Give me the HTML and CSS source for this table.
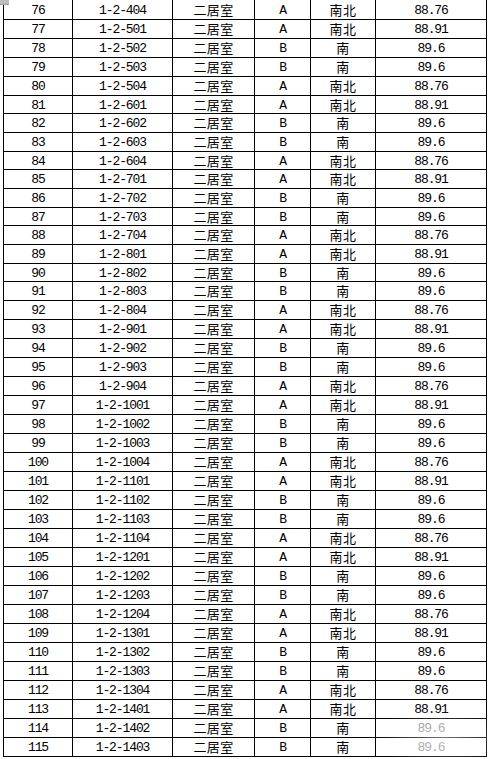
FILE: index.html
```html
<!DOCTYPE html>
<html lang="zh">
<head>
<meta charset="utf-8">
<title>房源列表</title>
<link rel="stylesheet" href="styles.css">
</head>
<body>
<div class="corner"></div>
<div class="sheet">
<div class="row first"><div class="c">76</div><div class="c">1-2-404</div><div class="c cjk">二居室</div><div class="c">A</div><div class="c cjk">南北</div><div class="c">88.76</div></div>
<div class="row"><div class="c">77</div><div class="c">1-2-501</div><div class="c cjk">二居室</div><div class="c">A</div><div class="c cjk">南北</div><div class="c">88.91</div></div>
<div class="row"><div class="c">78</div><div class="c">1-2-502</div><div class="c cjk">二居室</div><div class="c">B</div><div class="c cjk">南</div><div class="c">89.6</div></div>
<div class="row"><div class="c">79</div><div class="c">1-2-503</div><div class="c cjk">二居室</div><div class="c">B</div><div class="c cjk">南</div><div class="c">89.6</div></div>
<div class="row"><div class="c">80</div><div class="c">1-2-504</div><div class="c cjk">二居室</div><div class="c">A</div><div class="c cjk">南北</div><div class="c">88.76</div></div>
<div class="row short"><div class="c">81</div><div class="c">1-2-601</div><div class="c cjk">二居室</div><div class="c">A</div><div class="c cjk">南北</div><div class="c">88.91</div></div>
<div class="row"><div class="c">82</div><div class="c">1-2-602</div><div class="c cjk">二居室</div><div class="c">B</div><div class="c cjk">南</div><div class="c">89.6</div></div>
<div class="row"><div class="c">83</div><div class="c">1-2-603</div><div class="c cjk">二居室</div><div class="c">B</div><div class="c cjk">南</div><div class="c">89.6</div></div>
<div class="row short"><div class="c">84</div><div class="c">1-2-604</div><div class="c cjk">二居室</div><div class="c">A</div><div class="c cjk">南北</div><div class="c">88.76</div></div>
<div class="row"><div class="c">85</div><div class="c">1-2-701</div><div class="c cjk">二居室</div><div class="c">A</div><div class="c cjk">南北</div><div class="c">88.91</div></div>
<div class="row"><div class="c">86</div><div class="c">1-2-702</div><div class="c cjk">二居室</div><div class="c">B</div><div class="c cjk">南</div><div class="c">89.6</div></div>
<div class="row short"><div class="c">87</div><div class="c">1-2-703</div><div class="c cjk">二居室</div><div class="c">B</div><div class="c cjk">南</div><div class="c">89.6</div></div>
<div class="row"><div class="c">88</div><div class="c">1-2-704</div><div class="c cjk">二居室</div><div class="c">A</div><div class="c cjk">南北</div><div class="c">88.76</div></div>
<div class="row"><div class="c">89</div><div class="c">1-2-801</div><div class="c cjk">二居室</div><div class="c">A</div><div class="c cjk">南北</div><div class="c">88.91</div></div>
<div class="row short"><div class="c">90</div><div class="c">1-2-802</div><div class="c cjk">二居室</div><div class="c">B</div><div class="c cjk">南</div><div class="c">89.6</div></div>
<div class="row"><div class="c">91</div><div class="c">1-2-803</div><div class="c cjk">二居室</div><div class="c">B</div><div class="c cjk">南</div><div class="c">89.6</div></div>
<div class="row"><div class="c">92</div><div class="c">1-2-804</div><div class="c cjk">二居室</div><div class="c">A</div><div class="c cjk">南北</div><div class="c">88.76</div></div>
<div class="row"><div class="c">93</div><div class="c">1-2-901</div><div class="c cjk">二居室</div><div class="c">A</div><div class="c cjk">南北</div><div class="c">88.91</div></div>
<div class="row"><div class="c">94</div><div class="c">1-2-902</div><div class="c cjk">二居室</div><div class="c">B</div><div class="c cjk">南</div><div class="c">89.6</div></div>
<div class="row"><div class="c">95</div><div class="c">1-2-903</div><div class="c cjk">二居室</div><div class="c">B</div><div class="c cjk">南</div><div class="c">89.6</div></div>
<div class="row"><div class="c">96</div><div class="c">1-2-904</div><div class="c cjk">二居室</div><div class="c">A</div><div class="c cjk">南北</div><div class="c">88.76</div></div>
<div class="row"><div class="c">97</div><div class="c">1-2-1001</div><div class="c cjk">二居室</div><div class="c">A</div><div class="c cjk">南北</div><div class="c">88.91</div></div>
<div class="row"><div class="c">98</div><div class="c">1-2-1002</div><div class="c cjk">二居室</div><div class="c">B</div><div class="c cjk">南</div><div class="c">89.6</div></div>
<div class="row"><div class="c">99</div><div class="c">1-2-1003</div><div class="c cjk">二居室</div><div class="c">B</div><div class="c cjk">南</div><div class="c">89.6</div></div>
<div class="row"><div class="c">100</div><div class="c">1-2-1004</div><div class="c cjk">二居室</div><div class="c">A</div><div class="c cjk">南北</div><div class="c">88.76</div></div>
<div class="row"><div class="c">101</div><div class="c">1-2-1101</div><div class="c cjk">二居室</div><div class="c">A</div><div class="c cjk">南北</div><div class="c">88.91</div></div>
<div class="row"><div class="c">102</div><div class="c">1-2-1102</div><div class="c cjk">二居室</div><div class="c">B</div><div class="c cjk">南</div><div class="c">89.6</div></div>
<div class="row"><div class="c">103</div><div class="c">1-2-1103</div><div class="c cjk">二居室</div><div class="c">B</div><div class="c cjk">南</div><div class="c">89.6</div></div>
<div class="row"><div class="c">104</div><div class="c">1-2-1104</div><div class="c cjk">二居室</div><div class="c">A</div><div class="c cjk">南北</div><div class="c">88.76</div></div>
<div class="row"><div class="c">105</div><div class="c">1-2-1201</div><div class="c cjk">二居室</div><div class="c">A</div><div class="c cjk">南北</div><div class="c">88.91</div></div>
<div class="row"><div class="c">106</div><div class="c">1-2-1202</div><div class="c cjk">二居室</div><div class="c">B</div><div class="c cjk">南</div><div class="c">89.6</div></div>
<div class="row"><div class="c">107</div><div class="c">1-2-1203</div><div class="c cjk">二居室</div><div class="c">B</div><div class="c cjk">南</div><div class="c">89.6</div></div>
<div class="row"><div class="c">108</div><div class="c">1-2-1204</div><div class="c cjk">二居室</div><div class="c">A</div><div class="c cjk">南北</div><div class="c">88.76</div></div>
<div class="row"><div class="c">109</div><div class="c">1-2-1301</div><div class="c cjk">二居室</div><div class="c">A</div><div class="c cjk">南北</div><div class="c">88.91</div></div>
<div class="row"><div class="c">110</div><div class="c">1-2-1302</div><div class="c cjk">二居室</div><div class="c">B</div><div class="c cjk">南</div><div class="c">89.6</div></div>
<div class="row"><div class="c">111</div><div class="c">1-2-1303</div><div class="c cjk">二居室</div><div class="c">B</div><div class="c cjk">南</div><div class="c">89.6</div></div>
<div class="row"><div class="c">112</div><div class="c">1-2-1304</div><div class="c cjk">二居室</div><div class="c">A</div><div class="c cjk">南北</div><div class="c">88.76</div></div>
<div class="row"><div class="c">113</div><div class="c">1-2-1401</div><div class="c cjk">二居室</div><div class="c">A</div><div class="c cjk">南北</div><div class="c">88.91</div></div>
<div class="row"><div class="c">114</div><div class="c">1-2-1402</div><div class="c cjk">二居室</div><div class="c">B</div><div class="c cjk">南</div><div class="c faded">89.6</div></div>
<div class="row"><div class="c">115</div><div class="c">1-2-1403</div><div class="c cjk">二居室</div><div class="c">B</div><div class="c cjk">南</div><div class="c faded">89.6</div></div>
</div>
<div class="watermark"></div>
</body>
</html>
```

FILE: styles.css
```css
html, body {
  margin: 0;
  padding: 0;
  background: #ffffff;
}
body {
  position: relative;
  width: 490px;
  height: 759px;
  overflow: hidden;
  color: #000000;
  font-family: "Liberation Mono", "Noto Sans CJK SC", monospace;
  font-size: 13px;
}
.sheet {
  margin-left: 3px;
  width: 484px;
}
.row {
  display: grid;
  grid-template-columns: 69px 100px 82px 56px 65px 111px;
  box-sizing: border-box;
  height: 19px;
  border-left: 1px solid #000;
  border-bottom: 1px solid #000;
  width: 484px;
}
.row.first {
  height: 20px;
}
.row.short {
  height: 18px;
}
.c {
  box-sizing: border-box;
  border-right: 1px solid #000;
  text-align: center;
  line-height: 15px;
  padding-top: 2px;
  letter-spacing: -1.1px;
  white-space: nowrap;
  overflow: hidden;
}
.first .c {
  padding-top: 3px;
}
.c.cjk {
  font-family: "Noto Sans CJK SC", sans-serif;
  letter-spacing: 0.4px;
  font-size: 13px;
  padding-top: 1px;
}
.first .c.cjk {
  padding-top: 2px;
}
.c.faded {
  color: #8c8c8c;
}
.corner {
  position: absolute;
  left: 0;
  top: 0;
  width: 9px;
  height: 4px;
  background: #bdbdbd;
  border-bottom: 1px solid #9a9a9a;
}
.watermark {
  position: absolute;
  left: 372px;
  top: 708px;
  width: 118px;
  height: 51px;
  background: radial-gradient(ellipse at 60% 60%, rgba(255,255,255,0.45), rgba(255,255,255,0) 70%);
  pointer-events: none;
}
```
